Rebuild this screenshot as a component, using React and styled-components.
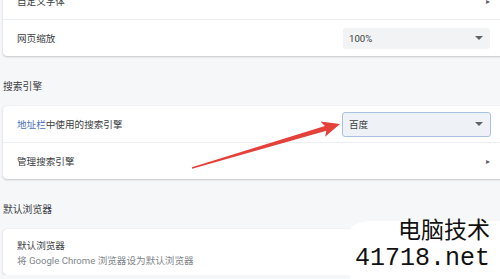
import styled, { createGlobalStyle } from "styled-components";
import * as React from "react";

const GlobalStyle = createGlobalStyle`
  html, body {
    margin: 0;
    padding: 0;
    background: #f6f7f9;
    overflow: hidden;
  }
  body {
    font-family: Roboto, "Noto Sans CJK SC", sans-serif;
    color: #3c4043;
  }
`;

export default function App() {
  return (
    <>
      <GlobalStyle />
      <Page>
        <Card>
          <Row>
            <Label>自定义字体</Label>
            <Chevron>▸</Chevron>
          </Row>
          <Row $divided>
            <Label>网页缩放</Label>
            <Select>
              <span>100%</span>
              <Caret />
            </Select>
          </Row>
        </Card>

        <SectionTitle>搜索引擎</SectionTitle>
        <Card>
          <Row>
            <Label>
              <Link>地址栏</Link>中使用的搜索引擎
            </Label>
            <Select $focused>
              <span>百度</span>
              <Caret />
            </Select>
          </Row>
          <Row $divided>
            <Label>管理搜索引擎</Label>
            <Chevron>▸</Chevron>
          </Row>
        </Card>

        <SectionTitle>默认浏览器</SectionTitle>
        <Card>
          <TallRow>
            <Label>默认浏览器</Label>
            <SubLabel>将 Google Chrome 浏览器设为默认浏览器</SubLabel>
          </TallRow>
        </Card>
      </Page>

      <Arrow viewBox="0 0 500 279" width="500" height="279">
        <polygon
          points="191.8,167.3 324.9,125.9 320.5,121.4 340,124 325.1,136.8 326.3,130.7 192.2,168.7"
          fill="#e5413b"
        />
      </Arrow>

      <Watermark>
        <WaterTitle>电脑技术</WaterTitle>
        <WaterUrl>41718.net</WaterUrl>
      </Watermark>
    </>
  );
}

const Page = styled.div`
  margin-top: -17px;
  padding-left: 3px;
  display: flex;
  flex-direction: column;
`;

const Card = styled.div`
  background: #fff;
  margin-right: -12px;
  border-radius: 4px;
  box-shadow: 0 1px 2px rgba(60, 64, 67, 0.25), 0 0 1px rgba(60, 64, 67, 0.15);
  display: flex;
  flex-direction: column;
`;

const Row = styled.div`
  height: 36px;
  display: flex;
  align-items: center;
  justify-content: space-between;
  padding: 0 21px 0 14px;
  border-top: ${(p) => (p.$divided ? "1px solid #eceff1" : "none")};
  margin: 0 ${(p) => (p.$divided ? "0" : "0")};
`;

const TallRow = styled.div`
  height: 46px;
  display: flex;
  flex-direction: column;
  justify-content: center;
  padding: 0 14px;
  gap: 1px;
`;

const Label = styled.div`
  font-size: 9.6px;
  color: #3c4043;
  letter-spacing: 0;
`;

const SubLabel = styled.div`
  font-size: 9.6px;
  color: #80868b;
`;

const Link = styled.span`
  color: #4a72b8;
`;

const Chevron = styled.span`
  font-size: 8px;
  color: #5f6368;
  margin-right: 1px;
`;

const Select = styled.div`
  box-sizing: border-box;
  width: ${(p) => (p.$focused ? "149px" : "147px")};
  height: ${(p) => (p.$focused ? "25px" : "21px")};
  margin-right: ${(p) => (p.$focused ? "0" : "1px")};
  background: ${(p) => (p.$focused ? "#eef2f6" : "#f1f3f4")};
  border: ${(p) => (p.$focused ? "1px solid #a9c1e3" : "none")};
  border-radius: 3px;
  display: flex;
  align-items: center;
  justify-content: space-between;
  padding: 0 7px 0 6px;
  font-size: 9.6px;
  color: #3c4043;
`;

const Caret = styled.span`
  width: 0;
  height: 0;
  border-left: 4px solid transparent;
  border-right: 4px solid transparent;
  border-top: 4px solid #5f6368;
`;

const SectionTitle = styled.div`
  font-size: 9.8px;
  color: #3c4043;
  padding: 24px 0 12px 0;
  line-height: 14px;
`;

const Arrow = styled.svg`
  position: absolute;
  left: 0;
  top: 0;
  pointer-events: none;
`;

const Watermark = styled.div`
  position: absolute;
  right: 0;
  bottom: 0;
  width: 150px;
  height: 58px;
  background: #fff;
  border-top-left-radius: 22px 10px;
  display: flex;
  flex-direction: column;
  align-items: flex-end;
  padding-right: 10px;
  box-sizing: border-box;
`;

const WaterTitle = styled.div`
  font-family: "Noto Sans CJK SC", sans-serif;
  font-size: 23px;
  line-height: 24px;
  color: #111;
  margin-top: -5px;
`;

const WaterUrl = styled.div`
  font-family: "Liberation Mono", monospace;
  font-size: 25px;
  line-height: 30px;
  color: #111;
  margin-top: 4px;
`;
